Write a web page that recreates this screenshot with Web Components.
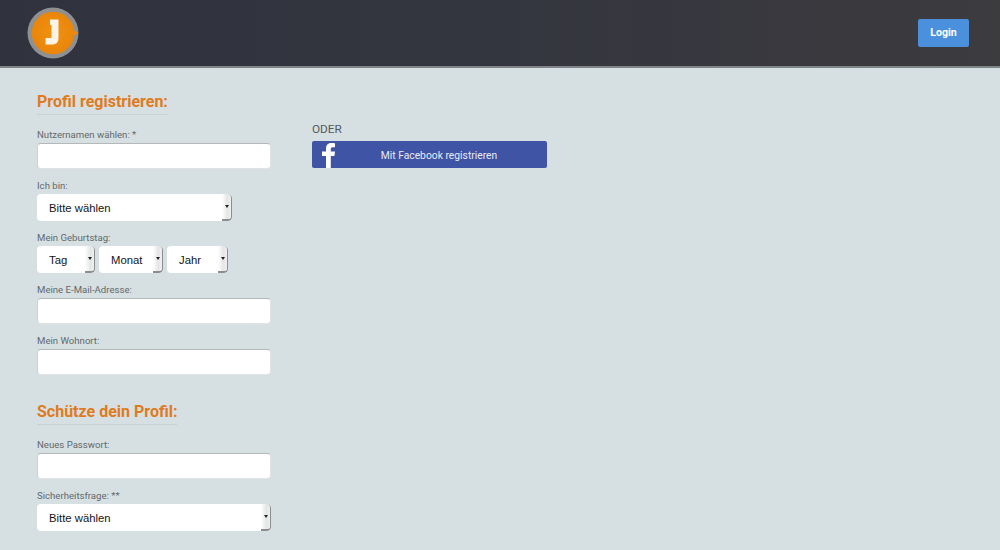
<!DOCTYPE html>
<html lang="de"><head><meta charset="utf-8"><title>Profil registrieren</title>
<style>
html,body{margin:0;padding:0;height:550px;overflow:hidden;background:#d6e0e2;font-family:Roboto,sans-serif}
</style></head><body>
<site-header></site-header>
<main-area>
  <form-col>
    <form-heading>Profil registrieren:</form-heading>
    <form-field label="Nutzernamen wählen: *"><text-box></text-box></form-field>
    <form-field label="Ich bin:"><select-box w="195" h="27">Bitte wählen</select-box></form-field>
    <form-field label="Mein Geburtstag:"><date-row>
      <select-box w="58" h="27">Tag</select-box><select-box w="64" h="27">Monat</select-box><select-box w="61" h="27">Jahr</select-box>
    </date-row></form-field>
    <form-field label="Meine E-Mail-Adresse:"><text-box></text-box></form-field>
    <form-field label="Mein Wohnort:"><text-box></text-box></form-field>
    <form-heading second>Schütze dein Profil:</form-heading>
    <form-field label="Neues Passwort:"><text-box></text-box></form-field>
    <form-field label="Sicherheitsfrage: **"><select-box w="234" h="27">Bitte wählen</select-box></form-field>
  </form-col>
  <social-col></social-col>
</main-area>
<script>
function def(name,css,html){
  customElements.define(name,class extends HTMLElement{
    constructor(){super();this.attachShadow({mode:'open'});}
    connectedCallback(){
      const h=typeof html==='function'?html(this):html;
      this.shadowRoot.innerHTML='<style>'+css+'</style>'+h;
    }
  });
}
def('site-header',`
:host{display:flex;align-items:center;justify-content:space-between;box-sizing:border-box;height:68px;padding:0 31px 0 27px;
background:linear-gradient(90deg,#30333e 0%,#33353f 45%,#3c3b3e 100%);border-bottom:2px solid #7f8587}
.logo{display:block;width:52px;height:52px;margin-top:-1px}
.login{display:flex;align-items:center;justify-content:center;box-sizing:border-box;width:51px;height:28px;margin-top:-1px;background:#4a90dc;border-radius:2px;color:#fff;font:700 10.6px Roboto,sans-serif}
`,`<svg class="logo" viewBox="0 0 52 52" aria-hidden="true">
<defs><radialGradient id="g" cx=".5" cy=".5" r=".55"><stop offset="0" stop-color="#f09212"/><stop offset="1" stop-color="#e98408"/></radialGradient></defs>
<circle cx="26" cy="26" r="25.500" fill="#8f9092"/>
<circle cx="26" cy="26" r="21.300" fill="url(#g)"/>
<path d="M47 23l4 3-4 3z" fill="#ee8a10"/>
<path d="M23 12.500H31.500V31c0 4.500-2.500 6.500-6.500 6.500H18.500v-6.500h4.500c1 0 1.500-.5 1.500-1.500V18H23z" fill="#fdf3e6"/>
</svg><div class="login">Login</div>`);
def('main-area',`:host{display:flex;align-items:flex-start;padding:22px 0 0 37px;gap:41px}`,`<slot></slot>`);
def('form-col',`:host{display:flex;flex-direction:column;width:234px;flex:none}`,`<slot></slot>`);
def('form-heading',`
:host{display:block;width:max-content;color:#df7b1e;font:700 16px/22px Roboto,sans-serif;padding:1px 0 1px;border-bottom:1px solid #c8d0d3;margin-bottom:13px}
:host([second]){margin-top:15px}
`,`<slot></slot>`);
def('form-field',`
:host{display:block;margin-bottom:10px}
.l{display:block;color:#63686b;font:400 9.600px/13px Roboto,sans-serif;margin-bottom:2px}
`,el=>`<span class="l">${el.getAttribute('label')}</span><slot></slot>`);
def('text-box',`
:host{display:block;box-sizing:border-box;width:234px;height:26px;background:#fff;border-radius:4px;border:1px solid #dfe3e3;border-top-color:#b4b8b8;border-left-color:#ced2d2}
`,``);
def('select-box',`
:host{display:flex;align-items:stretch;box-sizing:border-box;height:27px;background:#fff;border-radius:4px;color:#141414;font:400 11.300px 'Liberation Sans',sans-serif;overflow:hidden}
.t{flex:1;display:flex;align-items:center;padding-left:12px}
.a{flex:none;width:10px;display:flex;align-items:center;justify-content:center;background:linear-gradient(90deg,#fff,#e4e5e5 60%,#f0f0f0);border-right:1px solid #8b8e90;border-bottom:2px solid #8b8e90;border-radius:0 4px 4px 0;box-sizing:border-box}
.a i{display:block;width:0;height:0;border:2.500px solid transparent;border-top:3px solid #222;border-bottom:0}
`,el=>{el.style.width=el.getAttribute('w')+'px';if(el.getAttribute('h'))el.style.height=el.getAttribute('h')+'px';return `<span class="t"><slot></slot></span><span class="a"><i></i></span>`;});
def('date-row',`:host{display:flex;gap:4px}`,`<slot></slot>`);
def('social-col',`
:host{display:block;width:235px;padding-top:32px;flex:none}
.o{color:#55595c;font:400 11.800px/14px Roboto,sans-serif;margin-bottom:5px}
.b{position:relative;display:flex;align-items:center;justify-content:center;box-sizing:border-box;height:27px;padding:1px 0 0 19px;background:#3f54a4;border-radius:2px;color:#e8ebf5;font:400 10.300px Roboto,sans-serif;overflow:hidden}
.f{position:absolute;left:10px;top:2px;width:15px;height:25px}
`,`<div class="o">ODER</div><div class="b"><svg class="f" viewBox="0 0 15 25" aria-hidden="true"><path d="M4 25V13H0V8.500h4V5.500C4 1.800 6.300 0 9.500 0c1.500 0 2.900.1 3.500.2v4h-2.200C9.200 4.200 8.800 5 8.800 6.200v2.300h4.200l-.6 4.500H8.800v12z" fill="#fff"/></svg>Mit Facebook registrieren</div>`);
</script>
</body></html>
